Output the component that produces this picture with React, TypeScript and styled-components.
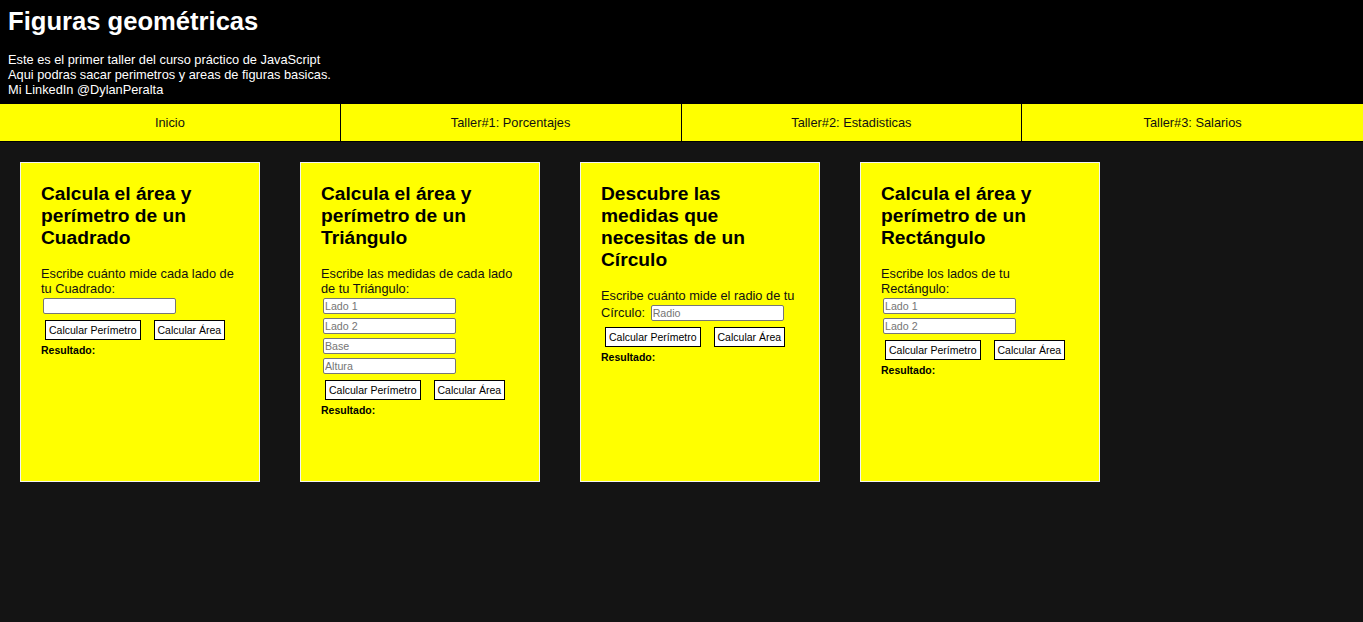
import React from "react";
import styled, { createGlobalStyle } from "styled-components";

const GlobalStyle = createGlobalStyle`
  html, body {
    margin: 0;
    padding: 0;
    background: #141414;
    font-family: "Liberation Sans", Arial, sans-serif;
  }
  * {
    box-sizing: border-box;
  }
`;

const Header = styled("header")(() => ({
  backgroundColor: "#000000",
  color: "#ffffff",
  padding: "7px 8px 7px",
}));

const Title = styled("h1")(() => ({
  margin: 0,
  fontSize: "25.6px",
  fontWeight: 700,
  lineHeight: "normal",
}));

const Intro = styled("p")(() => ({
  margin: "16px 0 0",
  fontSize: "12.8px",
  lineHeight: "normal",
}));

const Nav = styled("nav")(() => ({
  display: "flex",
  backgroundColor: "#ffff00",
  borderBottom: "1px solid #000000",
}));

const NavItem = styled("a")(() => ({
  width: "25%",
  height: 37,
  display: "flex",
  alignItems: "center",
  justifyContent: "center",
  fontSize: "12.8px",
  color: "#111111",
  textDecoration: "none",
  borderRight: "1px solid #000000",
  "&:last-child": {
    borderRight: "none",
  },
}));

const Main = styled("main")(() => ({
  display: "flex",
  flexWrap: "wrap" as const,
  gap: 40,
  padding: 20,
}));

const Card = styled("section")(() => ({
  width: 240,
  height: 320,
  padding: 20,
  backgroundColor: "#ffff00",
  border: "1px solid #f2f2f2",
  color: "#111111",
}));

const CardTitle = styled("h2")(() => ({
  margin: "0 0 17px",
  fontSize: "19.2px",
  fontWeight: 700,
  lineHeight: "22px",
  color: "#000000",
}));

const Prompt = styled("div")(() => ({
  fontSize: "12.8px",
  lineHeight: "normal",
}));

const Field = styled("input")(() => ({
  display: "inline-block",
  width: 133,
  height: 16,
  margin: 2,
  padding: "0 1px",
  border: "1px solid #767676",
  borderRadius: 2,
  backgroundColor: "#ffffff",
  fontFamily: "inherit",
  fontSize: "10.67px",
  color: "#000000",
  "&::placeholder": {
    color: "#757575",
  },
}));

const Actions = styled("div")(() => ({
  display: "flex",
  gap: 5,
}));

const Button = styled("button")(() => ({
  margin: 4,
  padding: "3px 3px",
  border: "1px solid #000000",
  backgroundColor: "#ffffff",
  fontFamily: "inherit",
  fontSize: "10.5px",
  lineHeight: "12px",
  color: "#000000",
  cursor: "pointer",
}));

const Result = styled("p")(() => ({
  margin: 0,
  fontSize: "10.5px",
  fontWeight: 700,
  lineHeight: "12px",
  color: "#000000",
}));

interface Figure {
  title: string;
  prompt: string;
  fields: string[];
}

const figures: Figure[] = [
  {
    title: "Calcula el área y perímetro de un Cuadrado",
    prompt: "Escribe cuánto mide cada lado de tu Cuadrado:",
    fields: [""],
  },
  {
    title: "Calcula el área y perímetro de un Triángulo",
    prompt: "Escribe las medidas de cada lado de tu Triángulo:",
    fields: ["Lado 1", "Lado 2", "Base", "Altura"],
  },
  {
    title: "Descubre las medidas que necesitas de un Círculo",
    prompt: "Escribe cuánto mide el radio de tu Círculo:",
    fields: ["Radio"],
  },
  {
    title: "Calcula el área y perímetro de un Rectángulo",
    prompt: "Escribe los lados de tu Rectángulo:",
    fields: ["Lado 1", "Lado 2"],
  },
];

const links = [
  "Inicio",
  "Taller#1: Porcentajes",
  "Taller#2: Estadisticas",
  "Taller#3: Salarios",
];

export default function App() {
  return (
    <>
      <GlobalStyle />
      <Header>
        <Title>Figuras geométricas</Title>
        <Intro>
          Este es el primer taller del curso práctico de JavaScript
          <br />
          Aqui podras sacar perimetros y areas de figuras basicas.
          <br />
          Mi LinkedIn @DylanPeralta
        </Intro>
      </Header>
      <Nav>
        {links.map((link) => (
          <NavItem key={link} href="#">
            {link}
          </NavItem>
        ))}
      </Nav>
      <Main>
        {figures.map((figure) => (
          <Card key={figure.title}>
            <CardTitle>{figure.title}</CardTitle>
            <Prompt>
              {figure.prompt}{" "}
              {figure.fields.map((field, index) => (
                <Field key={index} type="number" placeholder={field} />
              ))}
            </Prompt>
            <Actions>
              <Button type="button">Calcular Perímetro</Button>
              <Button type="button">Calcular Área</Button>
            </Actions>
            <Result>Resultado:</Result>
          </Card>
        ))}
      </Main>
    </>
  );
}
